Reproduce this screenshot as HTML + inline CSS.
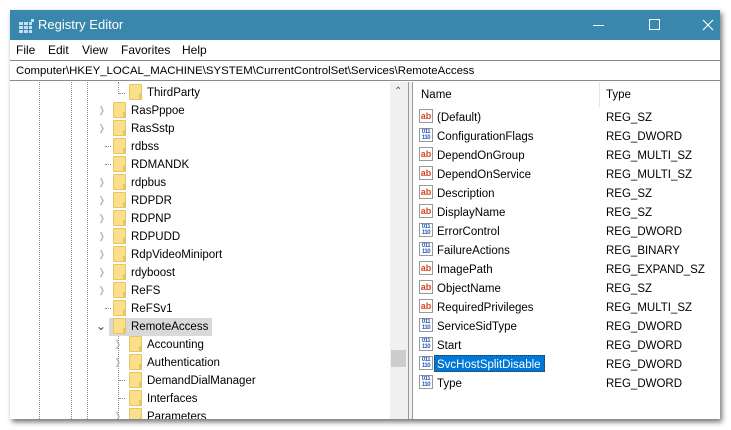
<!DOCTYPE html>
<html><head><style>
*{margin:0;padding:0;box-sizing:border-box}
body{width:731px;height:430px;background:#fff;position:relative;overflow:hidden;font-family:"Liberation Sans",sans-serif;font-size:11.5px;color:#000}
.win{position:absolute;left:10px;top:10px;width:710px;height:409px;background:#fff;box-shadow:2px 3px 5px rgba(0,0,0,.55);overflow:hidden}
.title{position:absolute;left:0;top:0;width:710px;height:30px;background:#3a87ad;color:#fff;font-size:13px}
.menu{position:absolute;top:30px;left:0;width:710px;height:20px;font-size:12px}
.menu span{position:absolute;top:3px}
.addr{position:absolute;top:50px;left:0;width:710px;height:21px;border-top:1px solid #8a8a8a;border-bottom:1px solid #8a8a8a;padding:4px 0 0 6px;font-size:11.4px}
.t{position:absolute;white-space:nowrap}
.f{position:absolute;width:13px;height:16px;background:#fbe08c;border:1px solid #e9c55f;border-radius:1px}
.f:after{content:"";position:absolute;right:-1px;bottom:-1px;width:3px;height:6px;background:#e9c55f}
.ch{position:absolute;color:#b5b5b5;font-size:9px;transform:scaleX(.8)}
.dv{position:absolute;border-left:1px dotted #888}
.dh{position:absolute;border-top:1px dotted #888;width:6px}
.ic{position:absolute;width:14px;height:14px;border:1px solid #999;background:#fff;font-size:9px;font-weight:bold;line-height:12px;text-align:center}
.ab{color:#d9431e}
.bn{color:#2a5ab8;font-size:6px;line-height:6px;letter-spacing:-.5px}
</style></head><body>
<div class="win">
<div class="title">
<svg style="position:absolute;left:9px;top:9px" width="16" height="14"><g fill="#bfe0f5"><rect x="0" y="3" width="4" height="3"/><rect x="5" y="3" width="4" height="3"/><rect x="10" y="3" width="3" height="3"/><rect x="0" y="7" width="4" height="3"/><rect x="5" y="7" width="4" height="3"/><rect x="10" y="7" width="3" height="3"/><rect x="0" y="11" width="4" height="3"/><rect x="5" y="11" width="4" height="3"/><rect x="10" y="11" width="3" height="3"/><rect x="12" y="0" width="3" height="3"/></g></svg>
<span class="t" style="left:28px;top:7px">Registry Editor</span>
<div style="position:absolute;left:583px;top:15px;width:11px;height:1px;background:#fff"></div>
<div style="position:absolute;left:639px;top:9px;width:11px;height:11px;border:1px solid #fff"></div>
<svg style="position:absolute;left:692px;top:9px" width="12" height="12"><path d="M1 1L11 11M11 1L1 11" stroke="#fff" stroke-width="1.2"/></svg>
</div>
<div class="menu"><span style="left:6px">File</span><span style="left:38px">Edit</span><span style="left:72px">View</span><span style="left:111px">Favorites</span><span style="left:172px">Help</span></div>
<div class="addr">Computer\HKEY_LOCAL_MACHINE\SYSTEM\CurrentControlSet\Services\RemoteAccess</div>

<div class="dv" style="left:29px;top:72px;height:337px"></div>
<div class="dv" style="left:61px;top:72px;height:337px"></div>
<div class="dv" style="left:77px;top:72px;height:337px"></div>
<div class="dv" style="left:108px;top:72px;height:12px"></div>
<div class="dh" style="left:109px;top:83px"></div>
<div class="f" style="left:119px;top:74px"></div><span class="t" style="left:137px;top:77px">ThirdParty</span>
<div style="position:absolute;left:99px;top:308px;width:103px;height:18px;background:#d9d9d9"></div>

<div style="position:absolute;left:380px;top:72px;width:18px;height:337px;background:#f0f0f0"></div>
<span class="t" style="left:384px;top:76px;color:#555;font-size:10px">&#8963;</span>
<div style="position:absolute;left:381px;top:340px;width:15px;height:17px;background:#cdcdcd"></div>
<div style="position:absolute;left:398px;top:72px;width:1px;height:337px;background:#999"></div>
<div style="position:absolute;left:399px;top:72px;width:3px;height:337px;background:#f0f0f0"></div>
<div style="position:absolute;left:402px;top:72px;width:1px;height:337px;background:#999"></div>

<div id="tree"></div>

<span class="t" style="left:411px;top:79px">Name</span>
<div style="position:absolute;left:589px;top:72px;width:1px;height:25px;background:#e5e5e5"></div>
<span class="t" style="left:596px;top:79px">Type</span>
<div id="vals"></div>
</div>
<script>
var tr=[["RasPppoe",1],["RasSstp",1],["rdbss",0],["RDMANDK",0],["rdpbus",1],["RDPDR",1],["RDPNP",1],["RDPUDD",1],["RdpVideoMiniport",1],["rdyboost",1],["ReFS",1],["ReFSv1",0],["RemoteAccess",2]];
var h="";
tr.forEach(function(r,i){var y=73+(i+1)*18;
 if(r[1]==1)h+='<span class="ch" style="left:88px;top:'+(y+4)+'px">&#10095;</span>';
 else if(r[1]==2)h+='<span class="ch" style="left:86px;top:'+(y+2)+'px;color:#444;font-size:12px;transform:none">&#8964;</span>';
 else h+='<div class="dh" style="left:95px;top:'+(y+9)+'px"></div>';
 h+='<div class="f" style="left:103px;top:'+(y+1)+'px"></div><span class="t" style="left:121px;top:'+(y+4)+'px">'+r[0]+'</span>';});
var ch=[["Accounting",1],["Authentication",1],["DemandDialManager",0],["Interfaces",0],["Parameters",1]];
h+='<div class="dv" style="left:108px;top:326px;height:83px"></div>';
ch.forEach(function(r,i){var y=73+(i+14)*18;
 if(r[1])h+='<span class="ch" style="left:104px;top:'+(y+4)+'px">&#10095;</span>';
 else h+='<div class="dh" style="left:109px;top:'+(y+9)+'px"></div>';
 h+='<div class="f" style="left:119px;top:'+(y+1)+'px"></div><span class="t" style="left:137px;top:'+(y+4)+'px">'+r[0]+'</span>';});
document.getElementById("tree").innerHTML=h;
var v=[["(Default)","REG_SZ"],["ConfigurationFlags","REG_DWORD"],["DependOnGroup","REG_MULTI_SZ"],["DependOnService","REG_MULTI_SZ"],["Description","REG_SZ"],["DisplayName","REG_SZ"],["ErrorControl","REG_DWORD"],["FailureActions","REG_BINARY"],["ImagePath","REG_EXPAND_SZ"],["ObjectName","REG_SZ"],["RequiredPrivileges","REG_MULTI_SZ"],["ServiceSidType","REG_DWORD"],["Start","REG_DWORD"],["SvcHostSplitDisable","REG_DWORD"],["Type","REG_DWORD"]];
h="";
v.forEach(function(r,i){var y=97+i*19;var s=r[1].indexOf("SZ")>=0;
 h+='<div class="ic '+(s?'ab':'bn')+'" style="left:409px;top:'+(y+2)+'px">'+(s?'ab':'011<br>110')+'</div>';
 if(i==13)h+='<div style="position:absolute;left:424px;top:'+(y+1)+'px;width:111px;height:17px;background:#0078d7;border:1px dotted #333"></div>';
 h+='<span class="t" style="left:427px;top:'+(y+5)+'px;'+(i==13?'color:#fff':'')+'">'+r[0]+'</span><span class="t" style="left:596px;top:'+(y+5)+'px">'+r[1]+'</span>';});
document.getElementById("vals").innerHTML=h;
</script>
</body></html>
